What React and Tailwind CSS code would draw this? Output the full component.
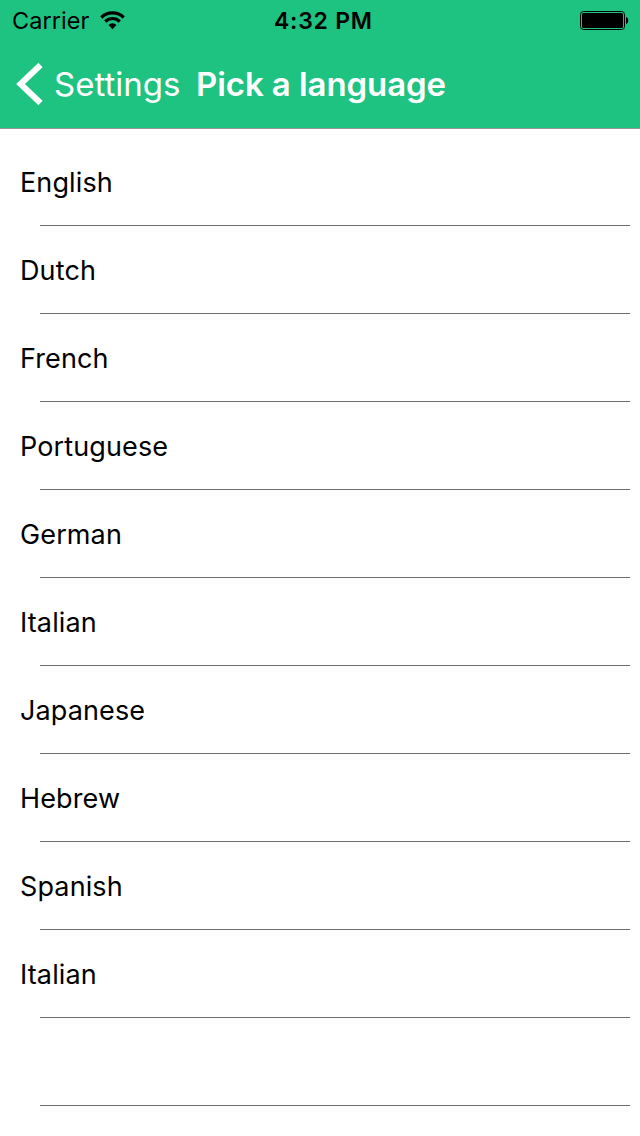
const languages = ["English", "Dutch", "French", "Portuguese", "German", "Italian", "Japanese", "Hebrew", "Spanish", "Italian", ""];

export default function App() {
  return (
    <div className="flex h-[1136px] w-[640px] flex-col overflow-hidden bg-white font-['Inter',sans-serif] text-black">
      <header className="h-[129px] shrink-0 border-b border-[#969696] bg-[#1ec382]">
        <div className="grid h-10 grid-cols-[262px_1fr_auto] items-center pr-[11px] pl-3">
          <div className="flex items-center gap-[10px]">
            <span className="w-[78px] text-[23.5px] leading-[42px] tracking-[0.05px]">Carrier</span>
            <svg className="mb-px" width="25" height="19" viewBox="0 0 25 19" fill="none" stroke="black" strokeWidth="3.2">
              <path d="M1.300 6.500a16 16 0 0 1 22.400 0" />
              <path d="M5.200 10.500a10.400 10.400 0 0 1 14.600 0" />
              <path d="M12.500 18.200l-4-4.200a5.700 5.700 0 0 1 8 0z" fill="black" stroke="none" />
            </svg>
          </div>
          <span className="text-[23px] leading-[42px] font-semibold tracking-[0.75px]">4:32 PM</span>
          <svg className="mb-px" width="49" height="19" viewBox="0 0 49 19">
            <rect x="0.5" y="0.5" width="44" height="18" rx="3" fill="none" stroke="black" />
            <rect x="2" y="2" width="41" height="15" rx="1.5" />
            <path d="M46 6c3 .8 3 6.200 0 7z" />
          </svg>
        </div>
        <div className="flex h-[88px] items-center pl-4 text-white">
          <svg width="27" height="42" viewBox="0 0 27 42" fill="none" stroke="white" strokeWidth="6">
            <path d="M24.500 2L4.500 21l20 19" />
          </svg>
          <span className="mt-[2px] ml-[11px] w-[126px] text-[33px]">Settings</span>
          <h1 className="mt-[2px] ml-[16px] text-[33px] font-semibold tracking-[-0.08px]">Pick a language</h1>
        </div>
      </header>
      <ul className="pt-[9px]">
        {languages.map((language, i) => (
          <li key={i} className="flex h-[88px] flex-col">
            <span className="h-[87px] pl-5 text-[27px] leading-[89px] tracking-[0.12px]">{language}</span>
            <span className="mr-[10px] ml-10 h-px bg-[#6d6d72]" />
          </li>
        ))}
      </ul>
    </div>
  );
}
